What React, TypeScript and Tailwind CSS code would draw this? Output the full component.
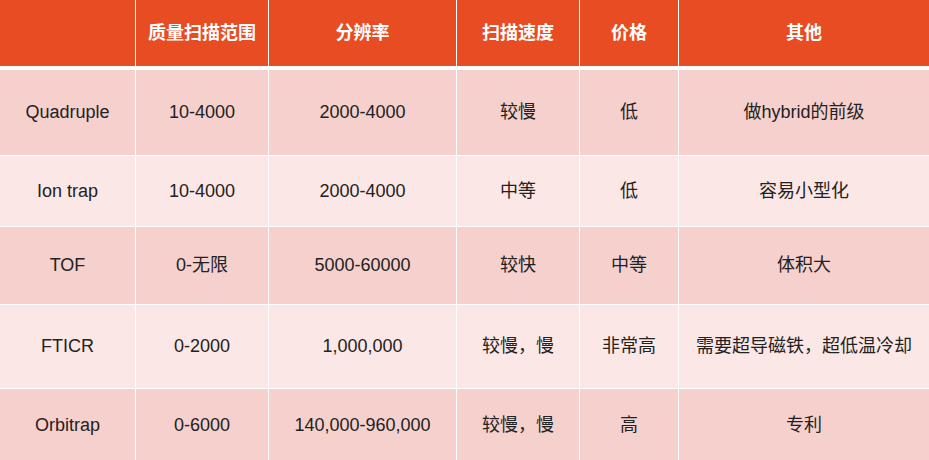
import React from 'react';

const cols = ['w-[136px]', 'w-[133px]', 'w-[188px]', 'w-[123px]', 'w-[99px]', 'w-[250px]'];

const headers = ['', '质量扫描范围', '分辨率', '扫描速度', '价格', '其他'];

const rows = [
  { h: 'h-[86px]', bg: 'bg-[#f5d0cd]', cells: ['Quadruple', '10-4000', '2000-4000', '较慢', '低', '做hybrid的前级'] },
  { h: 'h-[71px]', bg: 'bg-[#fbe7e5]', cells: ['Ion trap', '10-4000', '2000-4000', '中等', '低', '容易小型化'] },
  { h: 'h-[78px]', bg: 'bg-[#f5d0cd]', cells: ['TOF', '0-无限', '5000-60000', '较快', '中等', '体积大'] },
  { h: 'h-[84px]', bg: 'bg-[#fbe7e5]', cells: ['FTICR', '0-2000', '1,000,000', '较慢，慢', '非常高', '需要超导磁铁，超低温冷却'] },
  { h: 'h-[72px]', bg: 'bg-[#f5d0cd]', cells: ['Orbitrap', '0-6000', '140,000-960,000', '较慢，慢', '高', '专利'] },
];

export default function App() {
  return (
    <div className="w-[929px] h-[460px] overflow-hidden bg-white font-['Liberation_Sans','Noto_Sans_CJK_SC',sans-serif]">
      <div className="flex h-[66px] bg-[#e84c22] text-white font-bold text-[18px]">
        {headers.map((t, i) => (
          <div
            key={i}
            className={`${cols[i]} flex items-center justify-center ${i < 5 ? 'border-r border-white' : ''}`}
          >
            {t}
          </div>
        ))}
      </div>
      <div className="h-[4px]" />
      {rows.map((r, ri) => (
        <div key={ri} className={`flex ${r.h} ${ri < rows.length - 1 ? 'border-b border-white' : ''}`}>
          {r.cells.map((c, i) => (
            <div
              key={i}
              className={`${cols[i]} ${r.bg} flex items-center justify-center text-[18px] text-[#222] ${i < 5 ? 'border-r border-white' : ''}`}
            >
              {c}
            </div>
          ))}
        </div>
      ))}
    </div>
  );
}
